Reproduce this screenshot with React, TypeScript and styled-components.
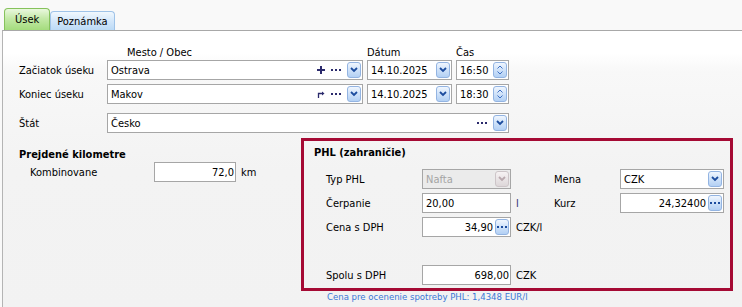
import React from "react";
import styled, { createGlobalStyle, css } from "styled-components";

const GlobalStyle = createGlobalStyle`
  html, body {
    margin: 0;
    padding: 0;
  }
  body {
    background: #f9f9f9;
    font-family: "DejaVu Sans Condensed", "DejaVu Sans", sans-serif;
    font-stretch: condensed;
    font-size: 11px;
    color: #000;
  }
`;

const NAVY = "#2b2a6c";

const Page = styled.div`
  width: 742px;
  height: 307px;
  overflow: hidden;
  box-sizing: border-box;
  padding-top: 8px;
  display: flex;
  flex-direction: column;
`;

const TabBar = styled.div`
  display: flex;
  align-items: flex-end;
  height: 22px;
  padding-left: 4px;
`;

const Tab = styled.div<{ $active?: boolean }>`
  box-sizing: border-box;
  height: ${(p) => (p.$active ? 22 : 19)}px;
  padding: 0 ${(p) => (p.$active ? 10 : 6)}px;
  display: flex;
  align-items: center;
  border: 1px solid ${(p) => (p.$active ? "#86c25c" : "#9fc3e8")};
  border-bottom: none;
  border-radius: 4px 4px 0 0;
  background: ${(p) =>
    p.$active
      ? "linear-gradient(#eaf8df, #c4e9a8 45%, #a4dc7d)"
      : "linear-gradient(#f1f8fe, #d3e7fa 50%, #bcdaf6)"};
`;

const Panel = styled.div`
  flex: 1;
  margin-left: 2px;
  border-top: 1px solid #a8a8a8;
  border-left: 1px solid #b4b4b4;
  background: linear-gradient(#ffffff 0px, #ffffff 22px, #f8f8f8 40px, #f3f3f3 140px, #f2f2f2);
  padding: 15px 0 0 16px;
`;

const columns = css`
  display: grid;
  grid-template-columns: 84px 256px 85px 53px;
  column-gap: 4px;
`;

const HeaderRow = styled.div`
  ${columns};
  height: 13px;
  line-height: 13px;
  margin-bottom: 1px;
`;

const HeaderCell = styled.span<{ $indent?: number }>`
  padding-left: ${(p) => p.$indent ?? 0}px;
`;

const RouteGrid = styled.div`
  ${columns};
  row-gap: 4px;
  align-items: center;
`;

const Label = styled.span<{ $indent?: number }>`
  padding-left: ${(p) => p.$indent ?? 0}px;
  white-space: nowrap;
`;

const WideCell = styled.div`
  grid-column: 2 / -1;
`;

const Spaced = styled.div`
  margin-top: 5px;
`;

const Field = styled.div<{ $disabled?: boolean; $width?: number; $gap?: number }>`
  box-sizing: border-box;
  height: 20px;
  ${(p) => (p.$width ? `width: ${p.$width}px;` : "")}
  border: 1px solid #a6a6a6;
  background: ${(p) => (p.$disabled ? "#ebebeb" : "#ffffff")};
  color: ${(p) => (p.$disabled ? "#a4a4a4" : "#000")};
  display: flex;
  align-items: center;
  gap: ${(p) => p.$gap ?? 2}px;
  padding: 0 1px 0 3px;
`;

const Value = styled.span<{ $right?: boolean }>`
  flex: 1;
  min-width: 0;
  text-align: ${(p) => (p.$right ? "right" : "left")};
  white-space: nowrap;
`;

const BlueBtn = styled.span<{ $disabled?: boolean }>`
  flex: none;
  box-sizing: border-box;
  width: 14px;
  height: 16px;
  border: 1px solid ${(p) => (p.$disabled ? "#cdc5c8" : "#93b4e2")};
  border-radius: 3px;
  background: ${(p) =>
    p.$disabled
      ? "linear-gradient(#f6f2f3, #ddd7d9)"
      : "linear-gradient(#f0f6fe, #cfe2f9 50%, #b3d0f4)"};
  display: flex;
  align-items: center;
  justify-content: center;
`;

const Bottom = styled.div`
  display: flex;
  margin-top: 5px;
`;

const KmBlock = styled.div`
  width: 282px;
  padding-top: 10px;
`;

const SectionTitle = styled.div`
  font-weight: bold;
  line-height: 14px;
`;

const KmRow = styled.div`
  display: flex;
  align-items: center;
  padding-left: 11px;
`;

const KmLabel = styled.span`
  width: 124px;
`;

const Unit = styled.span<{ $color?: string }>`
  padding-left: 5px;
  white-space: nowrap;
  color: ${(p) => p.$color ?? "#000"};
`;

const PhlColumn = styled.div`
  display: flex;
  flex-direction: column;
`;

const PhlBox = styled.div`
  box-sizing: border-box;
  width: 432px;
  border: 3px solid #a50a34;
  padding: 4px 6px 3px 10px;
  display: grid;
  grid-template-columns: 108px 89px 43px 66px 104px;
  grid-auto-rows: 20px;
  row-gap: 4px;
  align-items: center;
`;

const PhlTitle = styled.div`
  grid-column: 1 / -1;
  font-weight: bold;
  align-self: start;
  line-height: 16px;
`;

const EmptyRow = styled.div`
  grid-column: 1 / -1;
  height: 19px;
`;

const Note = styled.div`
  padding-left: 26px;
  line-height: 12px;
  font-size: 9.5px;
  color: #3b78d6;
`;

const Chevron = () => (
  <svg width="8" height="6" viewBox="0 0 8 6">
    <polyline points="1,1 4,4 7,1" fill="none" stroke="#1c4c9e" strokeWidth="1.8" />
  </svg>
);

const GreyChevron = () => (
  <svg width="8" height="6" viewBox="0 0 8 6">
    <polyline points="1,1 4,4 7,1" fill="none" stroke="#b9a9ae" strokeWidth="1.8" />
  </svg>
);

const Spin = () => (
  <svg width="8" height="12" viewBox="0 0 8 12">
    <polyline points="1.5,4.5 4,2 6.5,4.5" fill="none" stroke="#3d6fc2" strokeWidth="1" />
    <polyline points="1.5,7.5 4,10 6.5,7.5" fill="none" stroke="#3d6fc2" strokeWidth="1" />
  </svg>
);

const Dots = ({ color = NAVY }: { color?: string }) => (
  <svg width="10" height="2" viewBox="0 0 10 2">
    <rect x="0" y="0" width="2" height="2" fill={color} />
    <rect x="4" y="0" width="2" height="2" fill={color} />
    <rect x="8" y="0" width="2" height="2" fill={color} />
  </svg>
);

const Plus = () => (
  <svg width="8" height="8" viewBox="0 0 8 8">
    <rect x="3" y="0" width="2" height="8" fill={NAVY} />
    <rect x="0" y="3" width="8" height="2" fill={NAVY} />
  </svg>
);

const Jump = () => (
  <svg width="8" height="8" viewBox="0 0 8 8">
    <path d="M1.5 8 V3.5 H6" fill="none" stroke={NAVY} strokeWidth="1.3" />
    <path d="M5 1.5 L7.5 3.5 L5 5.5 Z" fill={NAVY} />
  </svg>
);

const DropBtn = () => (
  <BlueBtn>
    <Chevron />
  </BlueBtn>
);

const MoreBtn = () => (
  <BlueBtn>
    <Dots color="#1c4c9e" />
  </BlueBtn>
);

const SpinBtn = () => (
  <BlueBtn>
    <Spin />
  </BlueBtn>
);

export default function App() {
  return (
    <Page>
      <GlobalStyle />
      <TabBar>
        <Tab $active>Úsek</Tab>
        <Tab>Poznámka</Tab>
      </TabBar>
      <Panel>
        <HeaderRow>
          <span />
          <HeaderCell $indent={20}>Mesto / Obec</HeaderCell>
          <HeaderCell>Dátum</HeaderCell>
          <HeaderCell>Čas</HeaderCell>
        </HeaderRow>
        <RouteGrid>
          <Label>Začiatok úseku</Label>
          <Field $gap={6}>
            <Value>Ostrava</Value>
            <Plus />
            <Dots />
            <DropBtn />
          </Field>
          <Field>
            <Value>14.10.2025</Value>
            <DropBtn />
          </Field>
          <Field>
            <Value>16:50</Value>
            <SpinBtn />
          </Field>

          <Label>Koniec úseku</Label>
          <Field $gap={6}>
            <Value>Makov</Value>
            <Jump />
            <Dots />
            <DropBtn />
          </Field>
          <Field>
            <Value>14.10.2025</Value>
            <DropBtn />
          </Field>
          <Field>
            <Value>18:30</Value>
            <SpinBtn />
          </Field>

          <Spaced>
            <Label>Štát</Label>
          </Spaced>
          <WideCell>
            <Spaced>
              <Field $gap={6}>
                <Value>Česko</Value>
                <Dots />
                <DropBtn />
              </Field>
            </Spaced>
          </WideCell>
        </RouteGrid>

        <Bottom>
          <KmBlock>
            <SectionTitle>Prejdené kilometre</SectionTitle>
            <KmRow>
              <KmLabel>Kombinovane</KmLabel>
              <Field $width={82}>
                <Value $right>72,0</Value>
              </Field>
              <Unit>km</Unit>
            </KmRow>
          </KmBlock>

          <PhlColumn>
            <PhlBox>
              <PhlTitle>PHL (zahraničie)</PhlTitle>

              <Label $indent={12}>Typ PHL</Label>
              <Field $disabled>
                <Value>Nafta</Value>
                <BlueBtn $disabled>
                  <GreyChevron />
                </BlueBtn>
              </Field>
              <span />
              <Label>Mena</Label>
              <Field>
                <Value>CZK</Value>
                <DropBtn />
              </Field>

              <Label $indent={12}>Čerpanie</Label>
              <Field>
                <Value>20,00</Value>
              </Field>
              <Unit $color={NAVY}>l</Unit>
              <Label>Kurz</Label>
              <Field>
                <Value $right>24,32400</Value>
                <MoreBtn />
              </Field>

              <Label $indent={12}>Cena s DPH</Label>
              <Field>
                <Value $right>34,90</Value>
                <MoreBtn />
              </Field>
              <Unit>CZK/l</Unit>
              <span />
              <span />

              <EmptyRow />

              <Label $indent={12}>Spolu s DPH</Label>
              <Field>
                <Value $right>698,00</Value>
              </Field>
              <Unit>CZK</Unit>
            </PhlBox>
            <Note>Cena pre ocenenie spotreby PHL: 1,4348 EUR/l</Note>
          </PhlColumn>
        </Bottom>
      </Panel>
    </Page>
  );
}
